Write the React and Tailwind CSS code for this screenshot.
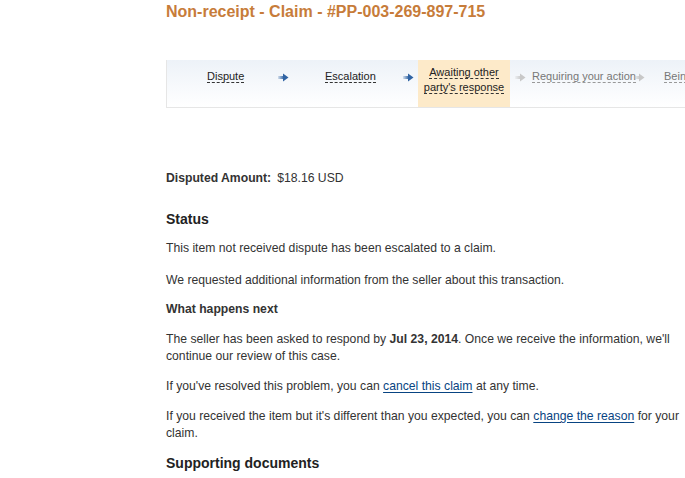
import React from 'react';

const Arrow = ({ done }) => {
  const c = done ? '#2f63a3' : '#c8c8c8';
  return (
    <svg width="11" height="9" viewBox="0 0 11 9" className="shrink-0">
      <defs>
        <linearGradient id={done ? 'ad' : 'an'} x1="0" x2="1" y1="0" y2="0">
          <stop offset="0" stopColor={c} stopOpacity="0.15" />
          <stop offset="1" stopColor={c} stopOpacity="1" />
        </linearGradient>
      </defs>
      <rect x="0" y="3" width="6" height="3" fill={`url(#${done ? 'ad' : 'an'})`} />
      <path d="M5 0.5 L10.5 4.5 L5 8.5 Z" fill={c} />
    </svg>
  );
};

const Step = ({ children, muted }) => (
  <span
    className={`border-b border-dashed ${muted ? 'text-[#777] border-[#999]' : 'text-[#222] border-[#333]'}`}
  >
    {children}
  </span>
);

const Link = ({ children }) => (
  <a href="#" className="text-[#084482] underline underline-offset-2">
    {children}
  </a>
);

const App = () => {
  return (
    <div
      className="w-[685px] h-[478px] overflow-hidden bg-white text-[12.2px] text-[#333]"
      style={{ fontFamily: 'Arial, "Liberation Sans", sans-serif' }}
    >
      <div className="pl-[166px]">
        <h1 className="pt-[2px] text-[16px] font-bold leading-[20px] text-[#c77c3a]">
          Non-receipt - Claim - #PP-003-269-897-715
        </h1>

        <div className="mt-[38px] w-[600px] h-[48px] shrink-0 flex border-l border-b border-[#e6e6e6] bg-gradient-to-b from-[#edf2f8] to-white text-[11px]">
          <div className="w-[111px] shrink-0 pl-[40px] pt-[9px] leading-[15px]">
            <Step>Dispute</Step>
          </div>
          <div className="shrink-0 pt-[13px]"><Arrow done /></div>
          <div className="w-[114px] shrink-0 pl-[36px] pt-[9px] leading-[15px]">
            <Step>Escalation</Step>
          </div>
          <div className="shrink-0 pt-[13px]"><Arrow done /></div>
          <div className="ml-[4px] w-[92px] h-[47px] shrink-0 bg-[#fdeac9] pt-[5px] text-center leading-[15px]">
            <Step>Awaiting other party's response</Step>
          </div>
          <div className="ml-[5px] shrink-0 pt-[13px]"><Arrow /></div>
          <div className="ml-[6px] w-[102px] shrink-0 pt-[9px] leading-[15px] whitespace-nowrap">
            <Step muted>Requiring your action</Step>
          </div>
          <div className="shrink-0 pt-[13px]"><Arrow /></div>
          <div className="ml-[19px] shrink-0 pt-[9px] leading-[15px] whitespace-nowrap">
            <Step muted>Being reviewed by PayPal</Step>
          </div>
        </div>

        <div className="w-[524px]">
          <p className="mt-[62px] leading-[17px]">
            <span className="font-bold">Disputed Amount:</span>
            <span className="ml-[6px]">$18.16 USD</span>
          </p>

          <h2 className="mt-[23px] text-[14px] font-bold leading-[18px] text-[#222]">Status</h2>
          <p className="mt-[12px] leading-[17px]">
            This item not received dispute has been escalated to a claim.
          </p>
          <p className="mt-[15px] leading-[17px]">
            We requested additional information from the seller about this transaction.
          </p>
          <p className="mt-[12px] leading-[17px] font-bold">What happens next</p>
          <p className="mt-[13px] leading-[17px]">
            The seller has been asked to respond by <span className="font-bold">Jul 23, 2014</span>. Once we receive the information, we'll continue our review of this case.
          </p>
          <p className="mt-[13px] leading-[17px]">
            If you've resolved this problem, you can <Link>cancel this claim</Link> at any time.
          </p>
          <p className="mt-[13px] leading-[17px]">
            If you received the item but it's different than you expected, you can <Link>change the reason</Link> for your claim.
          </p>
          <h2 className="mt-[12px] text-[14px] font-bold leading-[18px] text-[#222]">Supporting documents</h2>
        </div>
      </div>
    </div>
  );
};

export default App;
